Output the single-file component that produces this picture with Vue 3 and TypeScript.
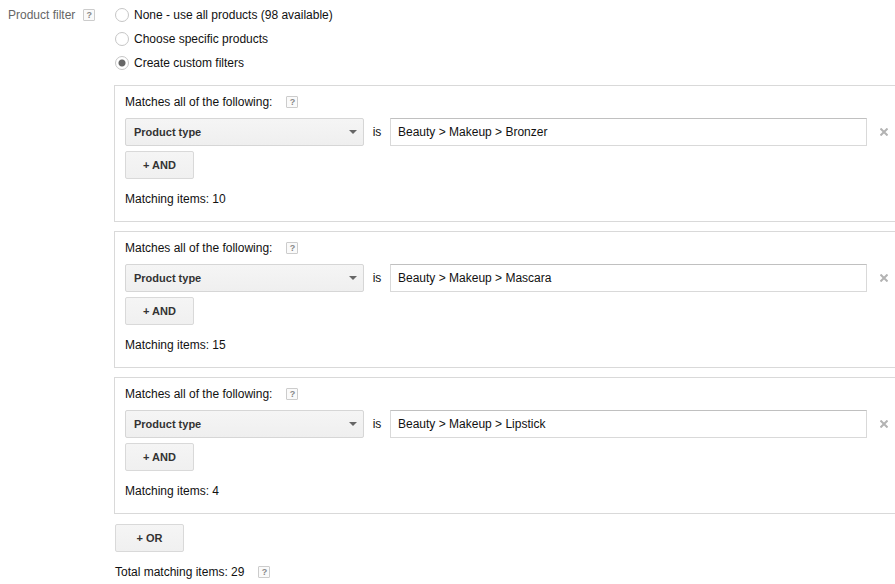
<script setup lang="ts">
import { ref } from 'vue'

interface FilterGroup {
  id: number
  field: string
  value: string
  count: number
}

const modes = [
  { id: 'none', label: 'None - use all products (98 available)' },
  { id: 'specific', label: 'Choose specific products' },
  { id: 'custom', label: 'Create custom filters' },
]

const mode = ref('custom')

const groups = ref<FilterGroup[]>([
  { id: 1, field: 'Product type', value: 'Beauty > Makeup > Bronzer', count: 10 },
  { id: 2, field: 'Product type', value: 'Beauty > Makeup > Mascara', count: 15 },
  { id: 3, field: 'Product type', value: 'Beauty > Makeup > Lipstick', count: 4 },
])
</script>

<template>
  <main class="setting">
    <div class="setting-name">
      <span id="filter-label">Product filter</span>
      <button type="button" class="help" aria-label="About product filter">?</button>
    </div>

    <div class="setting-body">
      <div class="modes" role="radiogroup" aria-labelledby="filter-label">
        <label v-for="m in modes" :key="m.id" class="mode">
          <input v-model="mode" type="radio" name="mode" :value="m.id" />
          <span>{{ m.label }}</span>
        </label>
      </div>

      <div class="groups">
        <section v-for="g in groups" :key="g.id" class="group">
          <div class="line">
            <span>Matches all of the following:</span>
            <button type="button" class="help" aria-label="About matching">?</button>
          </div>
          <div class="rule">
            <div class="picker">
              <select v-model="g.field" aria-label="Field">
                <option>Product type</option>
              </select>
              <svg class="caret" viewBox="0 0 8 4" aria-hidden="true"><path d="M0 0h8L4 4z" /></svg>
            </div>
            <label class="is" :for="'value-' + g.id">is</label>
            <input :id="'value-' + g.id" v-model="g.value" class="value" type="text" />
            <button type="button" class="remove" aria-label="Remove condition">
              <svg viewBox="0 0 8 8" aria-hidden="true"><path d="M.5.5l7 7M7.5.5l-7 7" /></svg>
            </button>
          </div>
          <button type="button" class="add">+ AND</button>
          <div class="line matching">Matching items: {{ g.count }}</div>
        </section>
      </div>

      <button type="button" class="add">+ OR</button>
      <div class="line total">
        <span>Total matching items: 29</span>
        <button type="button" class="help" aria-label="About total matching items">?</button>
      </div>
    </div>
  </main>
</template>

<style>
body {
  background: #fff;
}
</style>

<style scoped>
.setting {
  display: grid;
  grid-template-columns: 107px minmax(0, 1fr);
  padding: 3px 0 0 8px;
  font: 12px/16px "Liberation Sans", Arial, sans-serif;
  color: #111;
}

button,
input,
select {
  box-sizing: border-box;
  margin: 0;
  font: inherit;
}

.setting-name {
  display: flex;
  align-items: center;
  gap: 8px;
  height: 24px;
  color: #666;
}

.help {
  width: 12px;
  height: 12px;
  padding: 0;
  border: 1px solid #ccc;
  border-radius: 1px;
  background: #fafafa;
  color: #888;
  font-size: 9px;
  font-weight: bold;
  line-height: 10px;
  text-align: center;
}

.mode {
  display: flex;
  align-items: center;
  gap: 5px;
  height: 24px;
}

.mode input {
  appearance: none;
  width: 14px;
  height: 14px;
  border: 1px solid #c6c6c6;
  border-radius: 50%;
  background: #fff;
}

.mode input:checked {
  background: radial-gradient(circle, #666 3px, #fff 4px);
}

.groups {
  display: grid;
  gap: 9px;
  margin: 10px 0;
}

.group {
  padding: 8px 0 14px 10px;
  border: 1px solid #d9d9d9;
  border-right: 0;
  margin-left: -1px;
}

.line {
  display: flex;
  align-items: center;
  gap: 14px;
}

.rule {
  display: flex;
  align-items: center;
  margin: 8px 0 5px;
}

.picker {
  display: grid;
  align-items: center;
  flex: 0 0 239px;
}

.picker select,
.caret {
  grid-area: 1 / 1;
}

.picker select {
  appearance: none;
  height: 28px;
  padding: 0 24px 0 8px;
  border: 1px solid #d6d6d6;
  border-radius: 2px;
  background: linear-gradient(#f5f5f5, #efefef);
  color: #333;
  font-size: 11px;
  font-weight: bold;
}

.caret {
  justify-self: end;
  width: 8px;
  height: 4px;
  margin-right: 7px;
  fill: #666;
  pointer-events: none;
}

.is {
  flex: 0 0 26px;
  text-align: center;
}

.value {
  flex: 1;
  min-width: 0;
  height: 28px;
  padding: 0 7px;
  border: 1px solid #d9d9d9;
  border-top-color: #c0c0c0;
  background: #fff;
  color: #111;
}

.remove {
  display: grid;
  place-items: center;
  flex: 0 0 28px;
  height: 28px;
  padding: 0 0 0 6px;
  border: 0;
  background: none;
}

.remove svg {
  width: 8px;
  height: 8px;
  fill: none;
  stroke: #b3b3b3;
  stroke-width: 2;
}

.add {
  display: block;
  width: 69px;
  height: 28px;
  padding: 0;
  border: 1px solid #d9d9d9;
  border-radius: 2px;
  background: linear-gradient(#f5f5f5, #f0f0f0);
  color: #333;
  font-size: 11px;
  font-weight: bold;
}

.matching,
.total {
  margin-top: 12px;
}
</style>
